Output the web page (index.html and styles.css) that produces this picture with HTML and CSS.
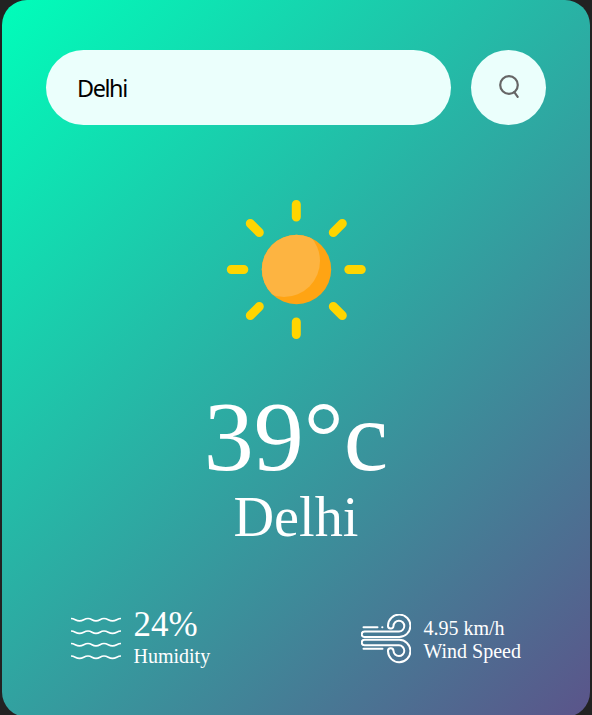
FILE: index.html
```html
<!DOCTYPE html>
<html lang="en">
<head>
<meta charset="utf-8">
<title>Weather App</title>
<link rel="stylesheet" href="styles.css">
</head>
<body>
<main class="card">
  <form class="search">
    <input class="search-input" type="text" value="Delhi" aria-label="City" spellcheck="false">
    <button class="search-button" type="button" aria-label="Search">
      <svg class="search-icon" viewBox="0 0 24 26" fill="none" stroke="#666" stroke-width="2.2" stroke-linecap="round">
        <circle cx="12" cy="11" r="8.800"/>
        <path d="M17.300 18.200l3.400 4.600"/>
      </svg>
    </button>
  </form>
  <section class="weather">
    <svg class="sun" viewBox="0 0 140 140">
      <defs><clipPath id="disc"><circle cx="70.500" cy="70.500" r="34.700"/></clipPath></defs>
      <circle cx="70.500" cy="70.500" r="34.700" fill="#ffa413"/>
      <circle cx="58" cy="62" r="36" fill="#fdb441" clip-path="url(#disc)"/>
      <g transform="translate(.3 .5)" stroke="#ffd500" stroke-width="9" stroke-linecap="round">
        <path d="M70 5v12.500M70 122.500v12.500M5 70h12.500M122.500 70H135M24 24l9 9M107 107l9 9M24 116l9-9M107 33l9-9"/>
      </g>
    </svg>
    <h1 class="temp">39°c</h1>
    <h2 class="city">Delhi</h2>
  </section>
  <section class="details">
    <div class="col">
      <svg class="detail-icon" viewBox="0 0 50 50" fill="none" stroke="#fff" stroke-width="1.7">
        <path d="M0 4.500C4 4.500 4.500 6.800 8.500 6.800S13 4.500 17 4.500S21 6.800 25 6.800S29 4.500 33 4.500S37.500 6.800 41.500 6.800S46 4.500 50 4.500"/>
        <path d="M0 17C4 17 4.500 19.300 8.500 19.300S13 17 17 17S21 19.300 25 19.300S29 17 33 17S37.500 19.300 41.500 19.300S46 17 50 17"/>
        <path d="M0 29.500C4 29.500 4.500 31.800 8.500 31.800S13 29.500 17 29.500S21 31.800 25 31.800S29 29.500 33 29.500S37.500 31.800 41.500 31.800S46 29.500 50 29.500"/>
        <path d="M0 42C4 42 4.500 44.300 8.500 44.300S13 42 17 42S21 44.300 25 44.300S29 42 33 42S37.500 44.300 41.500 44.300S46 42 50 42"/>
      </svg>
      <div class="detail-text">
        <p class="humidity">24%</p>
        <p class="label">Humidity</p>
      </div>
    </div>
    <div class="col">
      <svg class="detail-icon" viewBox="0 0 50 50" fill="none" stroke="#fff" stroke-width="2" stroke-linecap="round" stroke-linejoin="round">
        <path d="M2.500 13.200H16.500M21.200 13.200h.2M2.500 34.800H21.500"/>
        <path d="M3.500 23H38A11.200 11.200 0 1 0 27 11.500A2.700 2.700 0 0 0 32.500 12A5.400 5.400 0 1 1 38 17.500H3.500A2.750 2.750 0 0 0 3.500 23Z"/>
        <path d="M3.500 25.800H38A11.200 11.200 0 1 1 27 37.300A2.700 2.700 0 0 1 32.500 36.800A5.400 5.400 0 1 0 38 31.300H3.500A2.750 2.750 0 0 1 3.500 25.800Z"/>
      </svg>
      <div class="detail-text">
        <p class="wind">4.95 km/h</p>
        <p class="label">Wind Speed</p>
      </div>
    </div>
  </section>
</main>
</body>
</html>
```
FILE: styles.css
```css
* {
  margin: 0;
  padding: 0;
  box-sizing: border-box;
}

body {
  height: 715px;
  overflow: hidden;
  background: #222;
  font-family: "Liberation Serif", "Times New Roman", serif;
}

.card {
  width: 588px;
  height: 717px;
  margin-left: 2px;
  padding: 50px 44px 0;
  border-radius: 25px;
  background: linear-gradient(135deg, #00feba, #5b548a);
  color: #fff;
  text-align: center;
}

.search {
  display: flex;
  gap: 20px;
}

.search-input,
.search-button {
  height: 75px;
  border: 0;
  outline: 0;
  background: #ebfffc;
}

.search-input {
  flex: 1;
  min-width: 0;
  padding: 0 31px;
  border-radius: 37.5px;
  color: #000;
  font: 23.4px "Noto Sans", sans-serif;
  letter-spacing: -1.4px;
}

.search-button {
  display: flex;
  align-items: center;
  justify-content: center;
  width: 75px;
  padding-bottom: 2px;
  border-radius: 50%;
}

.search-icon {
  width: 24px;
  height: 26px;
}

.weather {
  display: flex;
  flex-direction: column;
  align-items: center;
  padding-top: 74px;
}

.sun {
  width: 140px;
  height: 140px;
}

.temp {
  margin-top: 48px;
  font-size: 100px;
  font-weight: 500;
  line-height: 100px;
}

.city {
  margin-top: 2px;
  font-size: 56.25px;
  font-weight: 400;
  line-height: 56px;
}

.details {
  display: flex;
  justify-content: space-between;
  align-items: center;
  margin-top: 64px;
  padding: 0 25px;
}

.col {
  display: flex;
  align-items: center;
  gap: 12.5px;
  text-align: left;
}

.detail-icon {
  width: 50px;
  height: 50px;
}

.detail-text {
  padding-top: 2px;
}

.humidity {
  font-size: 35px;
  line-height: 40px;
  margin-top: -6px;
}

.label,
.wind {
  font-size: 20px;
  line-height: 23px;
}
```
